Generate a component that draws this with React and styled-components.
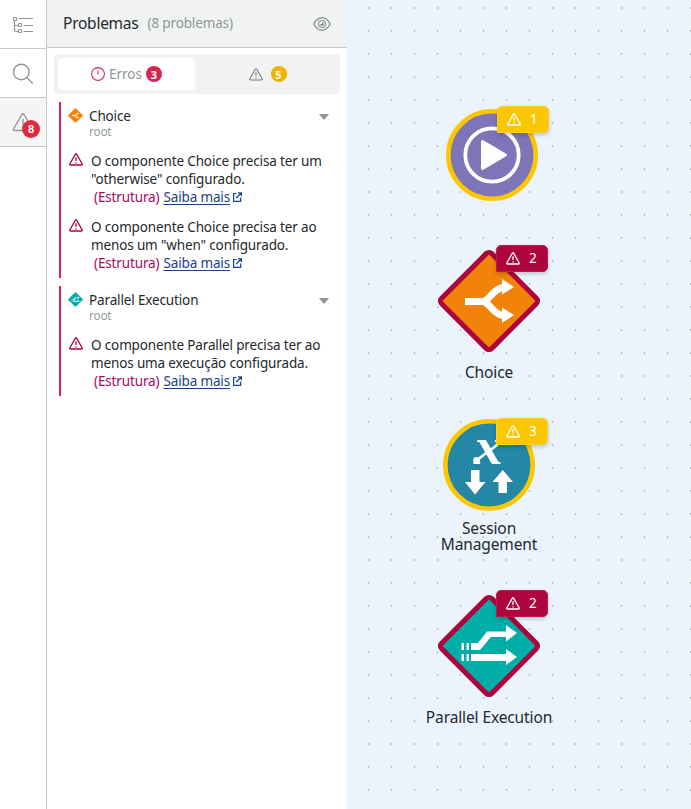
import React from "react";
import styled, { createGlobalStyle, css } from "styled-components";

const GlobalStyle = createGlobalStyle`
  * { box-sizing: border-box; }
  body {
    margin: 0;
    font-family: "Noto Sans", sans-serif;
    font-size: 13.5px;
    letter-spacing: -0.14px;
    color: #24292d;
  }
  svg { display: block; flex: none; }
`;

const Page = styled.div`
  display: grid;
  grid-template-columns: 47px 300px 1fr;
  width: 100%;
  height: 100vh;
  overflow: hidden;
`;

const Rail = styled.nav`
  display: flex;
  flex-direction: column;
  border-right: 1px solid #c5c9c9;
`;

const RailButton = styled.button`
  position: relative;
  height: 49px;
  padding: 0;
  border: 0;
  border-bottom: 1px solid #c5c9c9;
  background: ${(p) => (p.$active ? "#f5f5f5" : "#fff")};
  color: #8f9698;
`;

const Badge = styled.span`
  display: flex;
  align-items: center;
  justify-content: center;
  width: 16px;
  height: 16px;
  border-radius: 50%;
  background: ${(p) => p.$color};
  color: #fff;
  font-size: 11px;
  font-weight: 700;
  line-height: 1;
`;

const RailBadge = styled(Badge)`
  position: absolute;
  left: 22px;
  top: 22px;
  width: 18px;
  height: 18px;
`;

const Panel = styled.aside`
  background: #fff;
`;

const PanelHeader = styled.header`
  display: flex;
  align-items: center;
  height: 48px;
  padding: 0 16px;
  border-bottom: 1px solid #c5c9c9;
  background: #f1f3f2;
`;

const PanelTitle = styled.h1`
  margin: 0 9px 1px 0;
  font-size: 15.5px;
  font-weight: 400;
  letter-spacing: -0.25px;
  line-height: 20px;
`;

const PanelCount = styled.span`
  flex: 1;
  margin-bottom: 1px;
  color: #8f9698;
`;

const Tabs = styled.div`
  display: flex;
  height: 40px;
  margin: 6px 7px 0;
  padding: 4px;
  border-radius: 4px;
  background: #f1f3f2;
`;

const Tab = styled.button`
  display: flex;
  align-items: center;
  justify-content: center;
  gap: ${(p) => (p.$active ? "4px" : "8px")};
  flex: none;
  width: ${(p) => (p.$active ? "137px" : "145px")};
  padding: 0;
  border: 0;
  border-radius: 4px;
  background: ${(p) => (p.$active ? "#fff" : "transparent")};
  color: ${(p) => (p.$active ? "#8f9698" : "#74797c")};
  font: 13.5px "Noto Sans", sans-serif;
`;

const Groups = styled.div`
  display: flex;
  flex-direction: column;
  gap: 8px;
  padding: 8px 12px;
`;

const Group = styled.section`
  padding: 5px 0 3px;
  border-left: 2px solid #d6264f;
`;

const GroupHeader = styled.header`
  display: flex;
  align-items: flex-start;
  height: 36px;
  padding: 0 6px 0 7px;
`;

const GroupIcon = styled.div`
  width: 21px;
  padding-top: 1px;
`;

const GroupName = styled.div`
  flex: 1;
  line-height: 18px;
`;

const GroupPath = styled.div`
  color: #949a9c;
  font-size: 11.7px;
  line-height: 13px;
`;

const Caret = styled.i`
  margin-top: 7px;
  border: 5px solid transparent;
  border-top: 6px solid #8f9698;
  border-bottom: 0;
`;

const Issue = styled.article`
  display: flex;
  gap: 8px;
  padding: 9px 0 3px 8px;
  line-height: 18px;
  white-space: nowrap;
`;

const IssueMark = styled.div`
  padding-top: 1px;
  color: #ad053b;
`;

const IssueLink = styled.div`
  display: flex;
  align-items: center;
  gap: 3px;
  height: 18px;
  padding-left: 3px;
  color: #17418b;

  span { margin-right: 1px; color: #a8075e; }
  a { color: inherit; text-decoration: underline; text-underline-offset: 2px; }
`;

const Canvas = styled.main`
  position: relative;
  background-color: #ebf4fc;
  background-image: radial-gradient(circle at 1.5px 1px, #b6bcc2 0.6px, transparent 1.2px);
  background-size: 23px 23px;
  background-position: 20px 7px;
`;

const Node = styled.figure`
  position: absolute;
  left: ${(p) => p.$x}px;
  top: ${(p) => p.$y}px;
  display: flex;
  flex-direction: column;
  align-items: center;
  width: 140px;
  margin: 0;
`;

const NodeLabel = styled.figcaption`
  display: flex;
  flex-direction: column;
  align-items: center;
  margin-top: ${(p) => p.$gap}px;
  font-size: 15.5px;
  letter-spacing: -0.12px;
  line-height: 16px;
  white-space: nowrap;
`;

const tones = {
  warning: css`background: #fbc703; border-color: #ffcf26;`,
  error: css`background: #ad053b; border-color: #b71b4c;`,
};

const NodeBadge = styled.div`
  position: absolute;
  left: ${(p) => p.$left}px;
  top: ${(p) => p.$top}px;
  display: flex;
  align-items: center;
  gap: 9px;
  width: 52px;
  height: 27px;
  padding: 0 0 1px 9px;
  border: 1px solid;
  border-radius: 5px 5px 5px 0;
  box-shadow: 0 2px 4px rgba(0, 0, 0, 0.2);
  color: #fff;
  ${(p) => tones[p.$tone]}
`;

const Warning = ({ weight = 1.3 }) => (
  <svg width="14" height="13" viewBox="0 0 14 13" fill="none" stroke="currentColor" strokeWidth={weight} strokeLinejoin="round">
    <path d="M6.4 1.1Q7 .3 7.6 1.1L13.2 11Q13.5 12 12.5 12H1.5Q.5 12 .8 11Z" />
    <path d="M7 4.2V8M7 9.2V10.6" />
  </svg>
);

const TreeIcon = () => (
  <svg width="46" height="48" fill="none" stroke="currentColor" strokeWidth="1.2">
    <rect x="13.5" y="17.5" width="3" height="3" rx=".8" />
    <rect x="18.5" y="23.5" width="3" height="3" rx=".8" />
    <rect x="18.5" y="29.5" width="3" height="3" rx=".8" />
    <path d="M14.5 20.5V29.5Q14.5 31.500 16 31.500H18.5M14.5 25.500H18.5M19 18.5H33M23.5 25.500H33M23.5 31.500H33" />
  </svg>
);

const SearchIcon = () => (
  <svg width="46" height="48" fill="none" stroke="currentColor" strokeWidth="1.4">
    <circle cx="21.3" cy="23" r="7.8" />
    <path d="M27 28.7L32.8 34.5" />
  </svg>
);

const RailWarningIcon = () => (
  <svg width="46" height="48" fill="none" stroke="currentColor" strokeWidth="1.4" strokeLinejoin="round">
    <path d="M22 16.5Q23 15 24 16.5L32.5 31Q33 32.5 31.5 32.5H14.5Q13 32.5 13.5 31ZM23 21V27" />
  </svg>
);

const EyeIcon = () => (
  <svg width="18" height="14" viewBox="0 0 18 14" fill="none" stroke="#8f9698" strokeWidth="1.4">
    <path d="M.8 7Q4 .8 9 .8T17.2 7Q14 13.2 9 13.2T.8 7Z" />
    <circle cx="9" cy="7" r="3.5" strokeWidth="1.2" />
    <path d="M9 5V7H7A2 2 0 1 0 9 5Z" fill="#8f9698" stroke="none" />
  </svg>
);

const AlertIcon = () => (
  <svg width="14" height="14" viewBox="0 0 14 14" fill="none" stroke="#d6264f">
    <circle cx="7" cy="7" r="6.4" strokeWidth="1.1" />
    <path d="M7 3.8V7.7" />
  </svg>
);

const ExternalIcon = () => (
  <svg width="9" height="10" viewBox="0 0 9 10" fill="none" stroke="currentColor" strokeWidth="1.2">
    <path d="M3.5 1.5H.6V9.4H7.7V5.5M5 .8H8.4V4.2M8.2 1L3.2 6" />
  </svg>
);

const SplitGlyph = () => (
  <g>
    <path d="M28 52.500H45C53 52.500 55 40 66 38.500M45 52.500C53 52.500 55 65 66 66.500" fill="none" stroke="#fff" strokeWidth="7" />
    <path d="M65 30L77 38L65 45.500ZM65 58.500L77 66L65 74Z" fill="#fff" />
  </g>
);

const ParallelGlyph = () => (
  <g fill="#fff">
    <path d="M34 49H41L50 37.500H69V31L80 39L69 47.500V43H54L43 56H34Z" />
    <path d="M34 60H69V55L80 63L69 71V67H34Z" />
    <path d="M24.500 49H27V56H24.500ZM29.500 49H32V56H29.500ZM24.500 60H27V67H24.500ZM29.500 60H32V67H29.500Z" />
  </g>
);

const Diamond = ({ size = 104, fill, border, children }) => (
  <svg width={size} height={size} viewBox="0 0 104 104">
    <rect x="16.500" y="16.500" width="71" height="71" rx="4" transform="rotate(45 52 52)" fill={fill} stroke={border || fill} strokeWidth="5" />
    {children}
  </svg>
);

const Circle = ({ fill, children }) => (
  <svg width="92" height="92" viewBox="0 0 92 92">
    <circle cx="46" cy="46" r="43.700" fill={fill} stroke="#fbc703" strokeWidth="4.600" />
    {children}
  </svg>
);

const VariableX = styled.text`
  fill: #fff;
  font: italic 700 53px "Liberation Serif", serif;
  letter-spacing: 0;
`;

const GROUPS = [
  {
    name: "Choice",
    color: "#f18308",
    glyph: <SplitGlyph />,
    issues: [
      ["O componente Choice precisa ter um", '"otherwise" configurado.'],
      ["O componente Choice precisa ter ao", 'menos um "when" configurado.'],
    ],
  },
  {
    name: "Parallel Execution",
    color: "#00ada8",
    glyph: <ParallelGlyph />,
    issues: [["O componente Parallel precisa ter ao", "menos uma execução configurada."]],
  },
];

const IssueItem = ({ lines }) => (
  <Issue>
    <IssueMark><Warning /></IssueMark>
    <div>
      {lines.map((line) => <div key={line}>{line}</div>)}
      <IssueLink><span>(Estrutura)</span><a>Saiba mais</a><ExternalIcon /></IssueLink>
    </div>
  </Issue>
);

const IssueGroup = ({ group }) => (
  <Group>
    <GroupHeader>
      <GroupIcon>
        <Diamond size={15} fill={group.color}>{group.glyph}</Diamond>
      </GroupIcon>
      <GroupName>{group.name}<GroupPath>root</GroupPath></GroupName>
      <Caret />
    </GroupHeader>
    {group.issues.map((lines) => <IssueItem key={lines[0]} lines={lines} />)}
  </Group>
);

const Flag = ({ tone, count, top, left = 77 }) => (
  <NodeBadge $tone={tone} $top={top} $left={left}><Warning />{count}</NodeBadge>
);

export default function App() {
  return (
    <>
      <GlobalStyle />
      <Page>
        <Rail>
          <RailButton><TreeIcon /></RailButton>
          <RailButton><SearchIcon /></RailButton>
          <RailButton $active><RailWarningIcon /><RailBadge $color="#df2a3b">8</RailBadge></RailButton>
        </Rail>
        <Panel>
          <PanelHeader>
            <PanelTitle>Problemas</PanelTitle>
            <PanelCount>(8 problemas)</PanelCount>
            <EyeIcon />
          </PanelHeader>
          <Tabs>
            <Tab $active><AlertIcon />Erros<Badge $color="#d6264f">3</Badge></Tab>
            <Tab><Warning weight={1.1} /><Badge $color="#f1b300">5</Badge></Tab>
          </Tabs>
          <Groups>
            {GROUPS.map((group) => <IssueGroup key={group.name} group={group} />)}
          </Groups>
        </Panel>
        <Canvas>
          <Node $x={75} $y={109}>
            <Circle fill="#7d75b8">
              <circle cx="46" cy="46" r="26.700" fill="none" stroke="#fff" strokeWidth="3.800" />
              <path d="M36.500 32.500L59.500 46L36.500 59.500Z" fill="#fff" stroke="#fff" strokeWidth="3" strokeLinejoin="round" />
            </Circle>
            <Flag tone="warning" count={1} top={-3} left={75} />
          </Node>
          <Node $x={72} $y={249}>
            <Diamond fill="#f18308" border="#ad053b"><SplitGlyph /></Diamond>
            <Flag tone="error" count={2} top={-4} />
            <NodeLabel $gap={11}><span>Choice</span></NodeLabel>
          </Node>
          <Node $x={72} $y={419}>
            <Circle fill="#2587a6">
              <VariableX x="31" y="44.5" textLength="29" lengthAdjust="spacingAndGlyphs">x</VariableX>
              <circle cx="33.500" cy="41.300" r="3.300" fill="#fff" />
              <circle cx="56" cy="22" r="3.300" fill="#fff" />
              <path d="M28 51H36.500V63H42.500L32 75.500L22 63H28ZM55.500 74H64V63H70L59.700 51L49.500 63H55.500Z" fill="#fff" />
            </Circle>
            <Flag tone="warning" count={3} top={-1} />
            <NodeLabel $gap={9}><span>Session</span><span>Management</span></NodeLabel>
          </Node>
          <Node $x={72} $y={594}>
            <Diamond fill="#00ada8" border="#ad053b"><ParallelGlyph /></Diamond>
            <Flag tone="error" count={2} top={-4} />
            <NodeLabel $gap={11}><span>Parallel Execution</span></NodeLabel>
          </Node>
        </Canvas>
      </Page>
    </>
  );
}
